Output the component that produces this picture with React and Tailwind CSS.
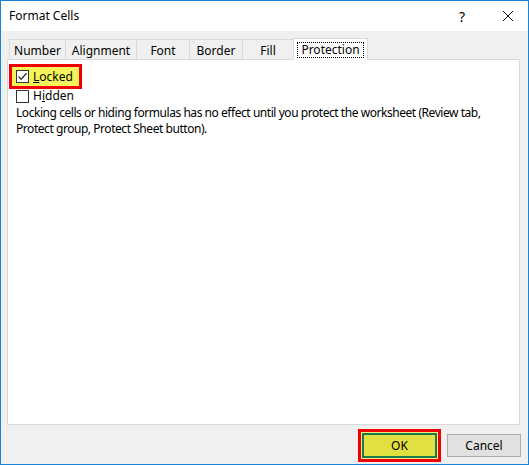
import React from "react";

const tabs = [
    { label: "Number", w: "w-[57px]" },
    { label: "Alignment", w: "w-[72px]" },
    { label: "Font", w: "w-[54px]" },
    { label: "Border", w: "w-[54px]" },
    { label: "Fill", w: "w-[52px]" },
];

const Checkbox = ({ checked }) => (
    <span className="w-[13px] h-[13px] border border-[#333] bg-white flex items-center justify-center shrink-0">
        {checked && (
            <svg width="11" height="11" viewBox="0 0 11 11">
                <path d="M1.5 5.5 L4.2 8.2 L9.5 2.2" fill="none" stroke="#333" strokeWidth="1.3" />
            </svg>
        )}
    </span>
);

const App = () => {
    return (
        <div
            className="w-[529px] h-[465px] border border-[#1883d7] bg-[#f0f0f0] flex flex-col text-[12px] text-black overflow-hidden"
            style={{ fontFamily: '"Noto Sans", "Open Sans", sans-serif' }}
        >
            {/* title bar */}
            <div className="h-[30px] bg-white flex items-center pl-2 shrink-0">
                <span className="flex-1 text-[12px]">Format Cells</span>
                <span className="w-[20px] text-center text-[14px] mr-[30px]">?</span>
                <svg width="12" height="12" viewBox="0 0 12 12" className="mr-[14px]">
                    <path d="M1 1 L11 11 M11 1 L1 11" stroke="#111" strokeWidth="1" />
                </svg>
            </div>

            {/* tabs */}
            <div className="pl-[8px] pt-[7px] flex items-end h-[28px] shrink-0">
                {tabs.map((t, i) => (
                    <div
                        key={i}
                        className={`${t.w} h-[20px] pt-[2px] border border-[#d9d9d9] border-b-0 -mr-px flex items-center justify-center leading-none`}
                    >
                        {t.label}
                    </div>
                ))}
                <div className="w-[75px] h-[22px] border border-[#d9d9d9] border-b-0 bg-white -mb-px relative z-10 flex items-center justify-center">
                    <span className="border border-dotted border-black px-[3px] leading-[14px]">Protection</span>
                </div>
            </div>

            {/* panel */}
            <div className="ml-[6px] w-[513px] h-[366px] bg-white border border-[#d9d9d9] shrink-0 pt-[4px] pl-[1px]">
                <div className="w-[73px] h-[25px] border-[3px] border-[#f00000] bg-[#f4f45a] flex items-center pl-[4px] gap-[4px]">
                    <Checkbox checked />
                    <span><span className="underline">L</span>ocked</span>
                </div>
                <div className="flex items-center pl-[7px] gap-[4px] h-[16px] -mt-px">
                    <Checkbox />
                    <span>H<span className="underline">i</span>dden</span>
                </div>
                <div className="pl-[7px] mt-[2px] leading-[14px] tracking-[-0.45px] whitespace-nowrap">
                    <div>Locking cells or hiding formulas has no effect until you protect the worksheet (Review tab,</div>
                    <div className="mt-[2px]">Protect group, Protect Sheet button).</div>
                </div>
            </div>

            {/* buttons */}
            <div className="flex justify-end items-start pt-[4px] pr-[7px] gap-[6px]">
                <div className="border-[3px] border-[#f00000] bg-[#f4f07a] p-px">
                    <button className="w-[75px] h-[25px] border-2 border-[#1c7a50] bg-[#e0e041] flex items-center justify-center">
                        OK
                    </button>
                </div>
                <button className="w-[74px] h-[23px] mt-[5px] border border-[#adadad] bg-[#e1e1e1] flex items-center justify-center">
                    Cancel
                </button>
            </div>
        </div>
    );
};

export default App;
